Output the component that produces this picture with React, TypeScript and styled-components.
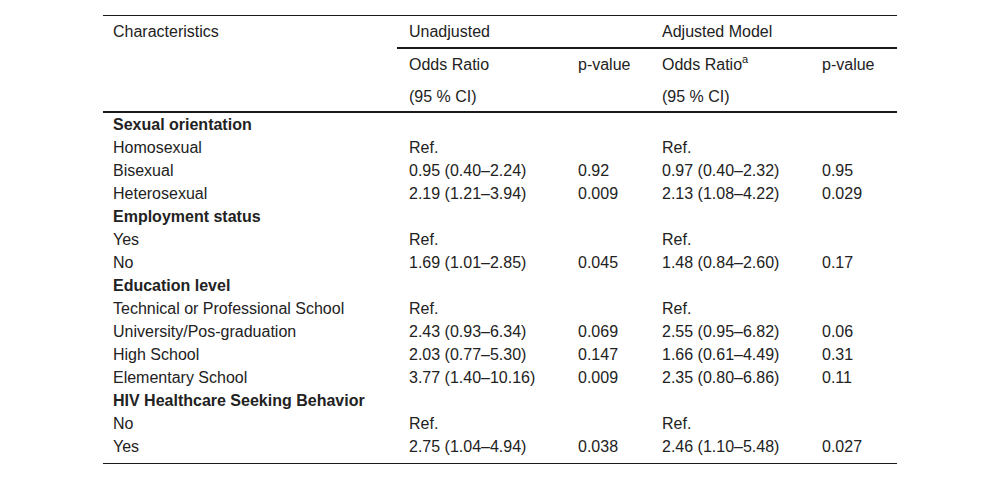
import React from 'react';
import styled, { createGlobalStyle } from 'styled-components';

type Row =
    | { kind: 'section'; title: string }
    | { kind: 'item'; label: string; or1: string; p1: string; or2: string; p2: string };

const rows: Row[] = [
    { kind: 'section', title: 'Sexual orientation' },
    { kind: 'item', label: 'Homosexual', or1: 'Ref.', p1: '', or2: 'Ref.', p2: '' },
    { kind: 'item', label: 'Bisexual', or1: '0.95 (0.40–2.24)', p1: '0.92', or2: '0.97 (0.40–2.32)', p2: '0.95' },
    { kind: 'item', label: 'Heterosexual', or1: '2.19 (1.21–3.94)', p1: '0.009', or2: '2.13 (1.08–4.22)', p2: '0.029' },
    { kind: 'section', title: 'Employment status' },
    { kind: 'item', label: 'Yes', or1: 'Ref.', p1: '', or2: 'Ref.', p2: '' },
    { kind: 'item', label: 'No', or1: '1.69 (1.01–2.85)', p1: '0.045', or2: '1.48 (0.84–2.60)', p2: '0.17' },
    { kind: 'section', title: 'Education level' },
    { kind: 'item', label: 'Technical or Professional School', or1: 'Ref.', p1: '', or2: 'Ref.', p2: '' },
    { kind: 'item', label: 'University/Pos-graduation', or1: '2.43 (0.93–6.34)', p1: '0.069', or2: '2.55 (0.95–6.82)', p2: '0.06' },
    { kind: 'item', label: 'High School', or1: '2.03 (0.77–5.30)', p1: '0.147', or2: '1.66 (0.61–4.49)', p2: '0.31' },
    { kind: 'item', label: 'Elementary School', or1: '3.77 (1.40–10.16)', p1: '0.009', or2: '2.35 (0.80–6.86)', p2: '0.11' },
    { kind: 'section', title: 'HIV Healthcare Seeking Behavior' },
    { kind: 'item', label: 'No', or1: 'Ref.', p1: '', or2: 'Ref.', p2: '' },
    { kind: 'item', label: 'Yes', or1: '2.75 (1.04–4.94)', p1: '0.038', or2: '2.46 (1.10–5.48)', p2: '0.027' },
];

const App = () => {
    return (
        <>
            <GlobalStyle />
            <Table>
                <colgroup>
                    <col style={{ width: 294 }} />
                    <col style={{ width: 169 }} />
                    <col style={{ width: 84 }} />
                    <col style={{ width: 160 }} />
                    <col style={{ width: 87 }} />
                </colgroup>
                <thead>
                    <tr>
                        <HeadCell rowSpan={3} $first $rule>Characteristics</HeadCell>
                        <HeadCell colSpan={2} $rule $h={33}>Unadjusted</HeadCell>
                        <HeadCell colSpan={2} $rule $h={33}>Adjusted Model</HeadCell>
                    </tr>
                    <tr>
                        <HeadCell $h={32}>Odds Ratio</HeadCell>
                        <HeadCell $h={32}>p-value</HeadCell>
                        <HeadCell $h={32}>Odds Ratio<Sup>a</Sup></HeadCell>
                        <HeadCell $h={32}>p-value</HeadCell>
                    </tr>
                    <tr>
                        <HeadCell $rule $h={32}>(95 % CI)</HeadCell>
                        <HeadCell $rule $h={32}></HeadCell>
                        <HeadCell $rule $h={32}>(95 % CI)</HeadCell>
                        <HeadCell $rule $h={32}></HeadCell>
                    </tr>
                </thead>
                <tbody>
                    {rows.map((row, index) =>
                        row.kind === 'section' ? (
                            <BodyRow key={index} $last={index === rows.length - 1}>
                                <SectionCell colSpan={5}>{row.title}</SectionCell>
                            </BodyRow>
                        ) : (
                            <BodyRow key={index} $last={index === rows.length - 1}>
                                <Cell $first>{row.label}</Cell>
                                <Cell>{row.or1}</Cell>
                                <Cell>{row.p1}</Cell>
                                <Cell>{row.or2}</Cell>
                                <Cell>{row.p2}</Cell>
                            </BodyRow>
                        )
                    )}
                </tbody>
            </Table>
        </>
    );
};

const GlobalStyle = createGlobalStyle`
    body {
        margin: 0;
        background: #ffffff;
        font-family: "Liberation Sans", Arial, sans-serif;
        color: #222222;
    }
`

const Table = styled.table`
    width: 794px;
    margin: 15px auto 0;
    table-layout: fixed;
    border-collapse: separate;
    border-spacing: 0;
    border-top: 1px solid #1a1a1a;
    border-bottom: 1px solid #1a1a1a;
    font-size: 16px;
    line-height: 23px;
`

const HeadCell = styled.th<{ $first?: boolean; $rule?: boolean; $h?: number }>`
    box-sizing: border-box;
    height: ${p => (p.$h ? `${p.$h}px` : 'auto')};
    padding: 4px 0 0 ${p => (p.$first ? '10px' : '12px')};
    text-align: left;
    vertical-align: top;
    font-weight: 400;
    white-space: nowrap;
    border-bottom: ${p => (p.$rule ? '2px solid #1a1a1a' : 'none')};
`

const Sup = styled.sup`
    font-size: 11px;
    line-height: 0;
    vertical-align: 7px;
`

const BodyRow = styled.tr<{ $last?: boolean }>`
    height: ${p => (p.$last ? '28px' : '23px')};

    td {
        vertical-align: top;
    }
`

const Cell = styled.td<{ $first?: boolean }>`
    padding: 0 0 0 ${p => (p.$first ? '10px' : '12px')};
    white-space: nowrap;
`

const SectionCell = styled.td`
    padding: 0 0 0 10px;
    font-weight: 700;
    white-space: nowrap;
`

export default App;
